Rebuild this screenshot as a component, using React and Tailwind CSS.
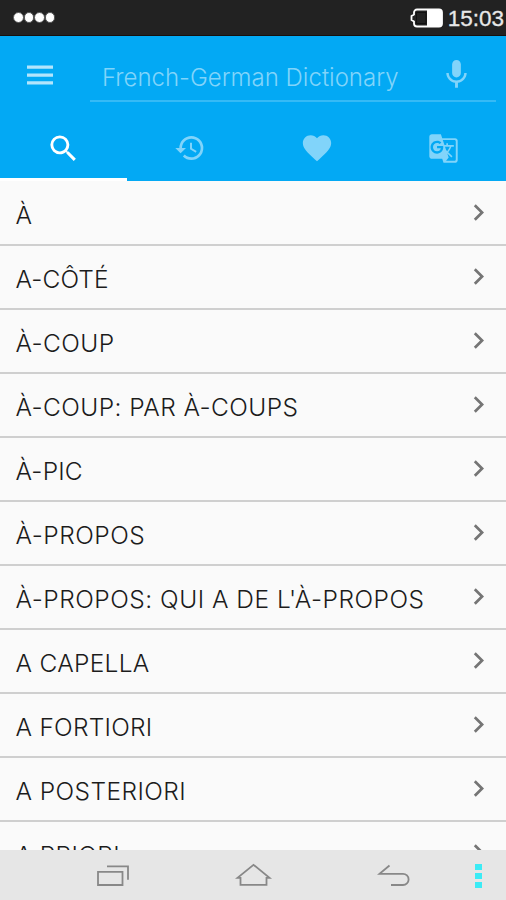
import {
  MdChevronRight,
  MdFavorite,
  MdGTranslate,
  MdHistory,
  MdMic,
  MdSearch,
} from 'react-icons/md';
import { clsx } from 'clsx';

const words = [
  { text: 'À', tracking: 'tracking-normal' },
  { text: 'A-CÔTÉ', tracking: 'tracking-[0.1px]' },
  { text: 'À-COUP', tracking: 'tracking-[0.4px]' },
  { text: 'À-COUP: PAR À-COUPS', tracking: 'tracking-[0.42px]' },
  { text: 'À-PIC', tracking: 'tracking-[0.2px]' },
  { text: 'À-PROPOS', tracking: 'tracking-[0.5px]' },
  { text: "À-PROPOS: QUI A DE L'À-PROPOS", tracking: 'tracking-[0.5px]' },
  { text: 'A CAPELLA', tracking: 'tracking-[0.3px]' },
  { text: 'A FORTIORI', tracking: 'tracking-[0.25px]' },
  { text: 'A POSTERIORI', tracking: 'tracking-[0.42px]' },
  { text: 'A PRIORI', tracking: 'tracking-[0.4px]' },
];

const tabs = [
  { name: 'Search', Icon: MdSearch, size: 35 },
  { name: 'History', Icon: MdHistory, size: 32 },
  { name: 'Favorites', Icon: MdFavorite, size: 34 },
  { name: 'Translate', Icon: MdGTranslate, size: 31 },
];

const StatusBar = () => (
  <div className="flex h-9 shrink-0 items-center justify-between border-b border-[#17110f] bg-[#222222] pl-[13px] pr-[2px]">
    <div className="flex">
      {[0, 1, 2, 3].map((dot) => (
        <span key={dot} className="h-[11px] w-[10.5px] rounded-full border border-[#555] bg-white" />
      ))}
    </div>
    <div className="flex items-center gap-[4px]">
      <svg className="h-[20px] w-[34px]" viewBox="0 0 34 20" fill="none">
        <path d="M7 1.5h22a3 3 0 0 1 3 3v11a3 3 0 0 1-3 3H7a3 3 0 0 1-3-3v-2L1.500 12V8L4 6.500v-2a3 3 0 0 1 3-3z" stroke="#fff" strokeWidth="1.800" />
        <path d="M17 2h12.500a2.500 2.500 0 0 1 2.500 2.500v11a2.500 2.500 0 0 1-2.500 2.500H17z" fill="#fff" />
        <path d="M6.500 4.500h9.500v11H6.500z" fill="#222" stroke="#111" />
      </svg>
      <span className="mt-[4px] font-['Liberation_Sans'] text-[22.500px] leading-none text-[#e8e8e8] [-webkit-text-stroke:0.3px_#e8e8e8]">15:03</span>
    </div>
  </div>
);

const Header = () => (
  <header className="shrink-0 bg-[#03a9f4]">
    <div className="flex h-[79px] items-center pl-[22px] pr-[10px]">
      <button aria-label="Menu" className="-mt-[2px] text-[#b3e5fc]">
        <svg width="36" height="36" viewBox="0 0 36 36" fill="currentColor">
          <path d="M5 8.500h26v3.300H5zM5 16.400h26v3.300H5zM5 24.300h26v3.300H5z" />
        </svg>
      </button>
      <div className="mb-[13px] ml-[32px] mt-[13px] flex h-[53px] flex-1 items-center justify-between border-b-2 border-[#35baf6] pl-[12px] pr-[22px]">
        <span className="mt-[6px] font-['Inter','Liberation_Sans',sans-serif] text-[24px] font-light text-[#81d4fa]">
          French-German Dictionary
        </span>
        <MdMic size={35} className="text-[#81d4fa]" />
      </div>
    </div>
    <nav className="grid h-[66px] grid-cols-4">
      {tabs.map(({ name, Icon, size }, i) => (
        <button
          key={name}
          aria-label={name}
          className={clsx(
            'flex items-center justify-center border-b-[3px] pl-px pt-[3px]',
            i === 0 ? 'border-white text-white' : 'border-transparent text-[#81d4fa]'
          )}
        >
          <Icon size={size} />
        </button>
      ))}
    </nav>
  </header>
);

const NavBar = () => (
  <footer className="flex h-[50px] shrink-0 items-center bg-[#e6e6e6] pl-[96px] text-[#888888]">
    <svg className="h-[24px] w-[34px]" viewBox="0 0 34 24" fill="none" stroke="currentColor" strokeWidth="1.800">
      <path d="M2 8.800h24.500v13.200H2zM11 3.300h21v13.400" />
    </svg>
    <svg className="ml-[105px] h-[24px] w-[38px]" viewBox="0 0 38 24" fill="none" stroke="currentColor" strokeWidth="1.800">
      <path d="M5.500 14.800H2.500L18.500 1.800l16 13h-3v7h-26z" />
    </svg>
    <svg className="ml-[104px] h-[24px] w-[34px]" viewBox="0 0 34 24" fill="none" stroke="currentColor" strokeWidth="1.800">
      <path d="M12.500 2.500L2.500 10.800H26a5.600 5.600 0 0 1 0 11.200H14" />
    </svg>
    <div className="ml-[64px] mt-px flex flex-col gap-[3px]">
      <span className="h-[6px] w-[7px] bg-[#3cebf5]" />
      <span className="h-[6px] w-[7px] bg-[#3cebf5]" />
      <span className="h-[6px] w-[7px] bg-[#3cebf5]" />
    </div>
  </footer>
);

export default function App() {
  return (
    <div className="flex h-[900px] w-[506px] flex-col overflow-hidden bg-[#fafafa]">
      <StatusBar />
      <Header />
      <ul className="min-h-0 flex-1 overflow-hidden pt-px">
        {words.map(({ text, tracking }) => (
          <li key={text} className="flex h-16 items-center justify-between border-b-2 border-[#cfcfcf] pl-[15.500px] pr-[11px]">
            <span
              className={clsx(
                "mt-[5px] whitespace-nowrap font-['Inter','Liberation_Sans',sans-serif] text-[24.500px] font-light leading-none text-[#1c1c1c]",
                tracking
              )}
            >
              {text}
            </span>
            <MdChevronRight size={33} className="-mt-px shrink-0 text-[#757575]" />
          </li>
        ))}
      </ul>
      <NavBar />
    </div>
  );
}
